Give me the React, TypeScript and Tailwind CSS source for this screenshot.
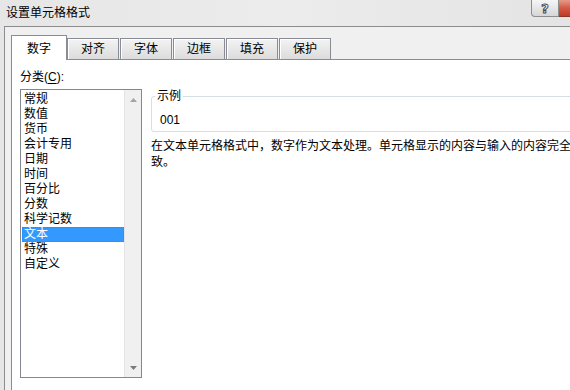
import React from "react";

const items = ["常规", "数值", "货币", "会计专用", "日期", "时间", "百分比", "分数", "科学记数", "文本", "特殊", "自定义"];
const tabs = ["对齐", "字体", "边框", "填充", "保护"];

export default function App() {
  return (
    <div className="w-[570px] h-[390px] overflow-hidden flex flex-col bg-gradient-to-r from-[#e6e6e6] via-[#ececec] to-[#e4e4e4] text-[12px] text-black font-['Liberation_Sans','Noto_Sans_CJK_SC',sans-serif]">
      {/* Title bar */}
      <div className="h-[26px] flex shrink-0">
        <div className="flex-1 pl-[6px] pt-[5px] leading-[16px] whitespace-nowrap">设置单元格格式</div>
        <div className="w-[28px] h-[17px] shrink-0 border border-t-0 border-[#8d8d8d] rounded-bl-[4px] bg-gradient-to-b from-[#f6f6f6] to-[#d6d6d6] flex items-center justify-center">
          <span className="text-[13px] leading-[13px] font-bold text-white [-webkit-text-stroke:1px_#4a4a4a] font-['DejaVu_Sans',sans-serif]">?</span>
        </div>
        <div className="w-[11px] h-[17px] shrink-0 bg-gradient-to-b from-[#e59a88] via-[#d25a45] to-[#c23a26] border-b border-[#8c3526]" />
      </div>
      {/* Body */}
      <div className="flex-1 min-h-0 ml-[4px] border-l border-t border-[#8c8c8c] bg-[#f0f0f0] pl-[6px] pt-[8px] flex flex-col">
        {/* Tabs */}
        <div className="flex items-end h-[24px] shrink-0">
          <div className="relative z-10 -mb-px h-[25px] w-[56px] bg-white border border-b-0 border-[#898c95] flex justify-center pt-[5px] leading-[16px]">
            数字
          </div>
          <div className="flex gap-[1px] items-end">
            {tabs.map((t) => (
              <div
                key={t}
                className="h-[21px] w-[52px] border border-b-0 border-[#898c95] bg-gradient-to-b from-[#f3f3f3] to-[#dcdcdc] flex justify-center pt-[2px] leading-[16px] shadow-[inset_1px_1px_0_#ffffff]"
              >
                {t}
              </div>
            ))}
          </div>
        </div>
        {/* Panel */}
        <div className="flex-1 w-[640px] bg-white border-l border-t border-[#898c95] flex pl-[8px] pt-[9px]">
          {/* Left column */}
          <div className="flex flex-col w-[122px] shrink-0">
            <div className="leading-[16px]">
              分类(<span className="underline underline-offset-2">C</span>):
            </div>
            <div className="mt-[4px] h-[289px] border border-[#828790] flex">
              <div className="flex-1 pt-[2px] pl-[1px] flex flex-col">
                {items.map((it) =>
                  it === "文本" ? (
                    <div
                      key={it}
                      className="h-[15px] leading-[13px] pl-[1px] bg-[#3399ff] text-white border border-dotted border-[#cc6600]"
                    >
                      {it}
                    </div>
                  ) : (
                    <div key={it} className="h-[15px] leading-[15px] pl-[2px]">
                      {it}
                    </div>
                  )
                )}
              </div>
              <div className="w-[17px] shrink-0 bg-[#f0f0f0] border-l border-[#e4e4e4] flex flex-col justify-between items-center pt-[8px] pb-[7px]">
                <svg width="7" height="4" viewBox="0 0 7 4">
                  <polygon points="3.5,0 7,4 0,4" fill="#a3a3a3" />
                </svg>
                <svg width="7" height="4" viewBox="0 0 7 4">
                  <polygon points="0,0 7,0 3.5,4" fill="#7a7a7a" />
                </svg>
              </div>
            </div>
          </div>
          {/* Right column */}
          <div className="ml-[9px] w-[440px] shrink-0 flex flex-col pt-[19px]">
            <fieldset className="border border-[#d5dfe5] rounded-[3px] pl-[8px] pt-[8px] pb-[3px]">
              <legend className="ml-[-5px] px-[2px] leading-[16px]">示例</legend>
              <div className="leading-[16px]">001</div>
            </fieldset>
            <div className="mt-[6px] leading-[16px]">
              <div className="whitespace-nowrap">在文本单元格格式中，数字作为文本处理。单元格显示的内容与输入的内容完全一</div>
              <div>致。</div>
            </div>
          </div>
        </div>
      </div>
    </div>
  );
}
